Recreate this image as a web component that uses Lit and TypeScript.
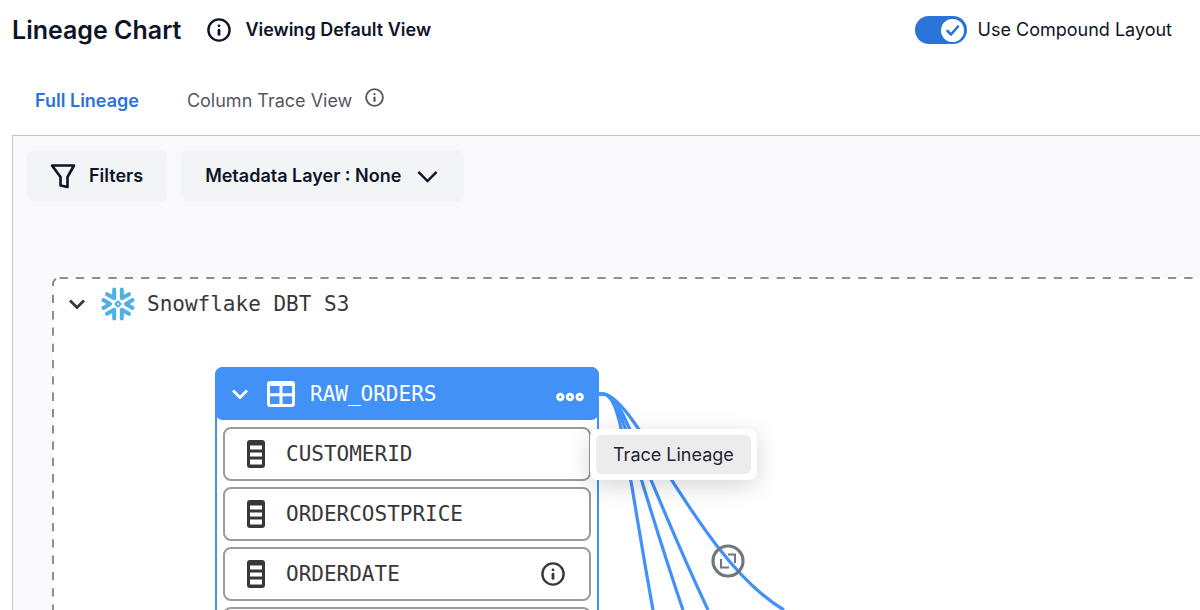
import { LitElement, html, css, svg } from "lit";
import { customElement, state } from "lit/decorators.js";

const infoIcon = (cls: string) => html`<svg class=${cls} viewBox="0 0 24 24" fill="none" aria-hidden="true">
  <circle cx="12" cy="12" r="10.6" stroke="currentColor" stroke-width="2.4" />
  <path d="M12 12.200V16.400" stroke="currentColor" stroke-width="2.8" stroke-linecap="round" />
  <circle cx="12" cy="7.8" r="1.4" fill="currentColor" />
</svg>`;

const chevron = (cls: string, weight = 2.8) => html`<svg class=${cls} viewBox="0 0 16 10" fill="none" aria-hidden="true">
  <path d="M1 1.5L8 8.5L15 1.5" stroke="currentColor" stroke-width=${weight} />
</svg>`;

const columnIcon = html`<svg class="column-icon" viewBox="0 0 18 28" aria-hidden="true">
  <rect width="18" height="28" rx="3" fill="#383838" />
  <path d="M3 5.500h12v4H3zM3 12.400h12v4H3zM3 19.400h12v5H3z" fill="#fff" />
</svg>`;

const tableIcon = html`<svg class="table-icon" viewBox="0 0 28 26" aria-hidden="true">
  <path fill="currentColor" fill-rule="evenodd" d="M3 0h22a3 3 0 0 1 3 3v20a3 3 0 0 1-3 3H3a3 3 0 0 1-3-3V3a3 3 0 0 1 3-3zM3 5v7.200h9.500V5zM15.500 5v7.200H25V5zM3 15.200V23h9.500v-7.800zM15.500 15.200V23H25v-7.800z" />
</svg>`;

const arms = (angle: number) => svg`<path transform="rotate(${angle} 17 17)"
  d="M13.200 2.500V11.300L6 7.200M20.800 2.500V11.300L28 7.200" />`;

const snowflakeIcon = html`<svg class="snowflake" viewBox="0 0 34 34" fill="none" stroke="#4db1e4" stroke-width="4" stroke-linecap="round" stroke-linejoin="round" aria-hidden="true">
  ${arms(0)}${arms(180)}
  <path d="M2.500 13L9 17L2.500 21M31.500 13L25 17L31.500 21" />
  <path d="M17 14.400L19.600 17L17 19.600L14.400 17Z" stroke-width="2" />
</svg>`;

@customElement("app-root")
export class AppRoot extends LitElement {
  @state() private compound = true;

  private columns = [
    { name: "CUSTOMERID", info: false },
    { name: "ORDERCOSTPRICE", info: false },
    { name: "ORDERDATE", info: true },
  ];

  static styles = css`
    :host {
      display: flex;
      flex-direction: column;
      height: 100vh;
      overflow: hidden;
      background: #fff;
      color: #0e1528;
      font: 400 18px/24px Inter, "Liberation Sans", sans-serif;
    }
    * { box-sizing: border-box; }
    svg { display: block; flex: none; }
    button { font: inherit; color: inherit; border: 0; padding: 0; background: none; cursor: pointer; }
    .top { display: flex; align-items: center; height: 60px; padding: 0 28px 0 12px; }
    h1 { margin: 0 26px 0 0; font-size: 25px; line-height: 32px; font-weight: 600; }
    .view { font-weight: 600; }
    .info-lg { width: 24px; height: 24px; margin-right: 14px; }
    .switch { display: flex; align-items: center; gap: 11px; margin-left: auto; cursor: pointer; }
    .track { display: grid; }
    .track > * { grid-area: 1 / 1; }
    .track input {
      appearance: none; width: 52px; height: 28px; margin: 0; border-radius: 14px; background: #99a1ad; cursor: pointer;
    }
    .track input:checked { background: #2c73d9; }
    .knob { width: 23px; height: 23px; margin: 0 3px; align-self: center; pointer-events: none; }
    .track input:checked + .knob { justify-self: end; }
    .tabs { display: flex; gap: 48px; height: 75px; padding: 28px 0 0 35px; align-items: flex-start; }
    .tab { display: flex; gap: 13px; line-height: 26px; color: #55575f; }
    .tab.active { color: #2c73d9; font-weight: 600; }
    .info-sm { width: 19px; height: 19px; }
    .canvas {
      position: relative; flex: 1; min-height: 0; margin-left: 12px; overflow: hidden;
      border: solid #c5c5cb; border-width: 1px 0 0 1px; background: #f9f9fc;
    }
    .toolbar { display: flex; gap: 14px; padding: 14px; font-weight: 600; }
    .tool { display: flex; align-items: center; height: 52px; border-radius: 8px; background: #f3f4f6; }
    .filters { gap: 13px; padding: 0 24px 0 23px; }
    .layer { gap: 16px; padding: 0 26px 0 24px; }
    .funnel { width: 26px; height: 26px; }
    .chev-lg { width: 21px; height: 13px; }
    .chev { width: 16px; height: 10px; }
    .board, .edges { position: absolute; left: 0; top: 0; width: 100%; height: 100%; }
    .edges { pointer-events: none; }
    .group-title {
      position: absolute; left: 56px; top: 151px; display: flex; align-items: center;
      color: #383838; font: 21px/32px "DejaVu Sans Mono", monospace;
    }
    .snowflake { width: 34px; height: 34px; margin: 0 12px 0 16px; }
    .node {
      position: absolute; left: 202px; top: 231px; width: 384px; border: 2px solid #4191f7; border-radius: 8px;
      background: #fff; color: #383838; font: 21px/32px "DejaVu Sans Mono", monospace;
    }
    .node-head {
      display: flex; align-items: center; height: 53px; margin: -2px -2px 7px; padding: 0 15px 0 17px;
      border-radius: 8px; background: #4191f7; color: #fff;
    }
    .table-icon { width: 28px; height: 26px; margin: 0 15px 0 19px; }
    .more { margin: 7px 0 0 auto; }
    .dots { width: 28px; height: 10px; }
    ul { list-style: none; margin: 0; padding: 0 6px; display: grid; gap: 6px; }
    li {
      display: flex; align-items: center; gap: 21px; height: 54px; padding: 0 24px 0 22px;
      border: 2px solid #9b9b9b; border-radius: 8px;
    }
    .column-icon { width: 18px; height: 28px; }
    .info-col { width: 24px; height: 24px; margin-left: auto; }
    .menu {
      position: absolute; left: 577px; top: 293px; padding: 6px; border-radius: 8px; background: #fff;
      box-shadow: 0 6px 24px rgb(0 0 0 / 16%);
    }
    .menu button { height: 39px; padding: 0 17px; border-radius: 6px; background: #ececec; color: #1f2433; }
  `;

  render() {
    return html`
      <header class="top">
        <h1>Lineage Chart</h1>
        ${infoIcon("info-lg")}
        <span class="view">Viewing Default View</span>
        <label class="switch">
          <span class="track">
            <input type="checkbox" role="switch" .checked=${this.compound}
              @change=${(e: Event) => (this.compound = (e.target as HTMLInputElement).checked)} />
            <svg class="knob" viewBox="0 0 23 23" fill="none" aria-hidden="true">
              <circle cx="11.500" cy="11.500" r="11.500" fill="#fff" />
              <path d="M6.500 12L10 15.500L17 7.500" stroke="#2c73d9" stroke-width="2.600" stroke-linecap="round" stroke-linejoin="round" />
            </svg>
          </span>
          Use Compound Layout
        </label>
      </header>
      <nav class="tabs">
        <button class="tab active">Full Lineage</button>
        <button class="tab">Column Trace View ${infoIcon("info-sm")}</button>
      </nav>
      <main class="canvas">
        <div class="board">
          <svg class="edges" fill="none" aria-hidden="true">
            <rect x="40" y="142" width="2400" height="1200" rx="6" fill="#fff" />
            <path d="M46.500 142H2400" stroke="#8f8f8f" stroke-width="2" stroke-dasharray="8.300 8" />
            <path d="M40 150v-2a6 6 0 0 1 3-5.200M40 158.800V1200" stroke="#8f8f8f" stroke-width="2" stroke-dasharray="8.300 8" />
            <path d="M715 418.500H722V427M708 423V431.500H716" stroke="#71777f" stroke-width="2" />
            <g stroke="#4191f7" stroke-width="3.200">
              <path d="M586 258H590C608 258 612 318 640 474" />
              <path d="M586 258H590C609 258 617 318 670 474" />
              <path d="M586 258H590C611 258 622 318 695 474" />
              <path d="M586 258H590C622 258 686 424 771 474" />
            </g>
            <circle cx="715" cy="425" r="15" stroke="#71777f" stroke-width="3.200" />
          </svg>
          <div class="group-title">
            ${chevron("chev")}${snowflakeIcon}<span>Snowflake DBT S3</span>
          </div>
          <section class="node">
            <div class="node-head">
              ${chevron("chev")}${tableIcon}<span>RAW_ORDERS</span>
              <button class="more" aria-label="More actions">
                <svg class="dots" viewBox="0 0 28 10" fill="none" stroke="#fff" stroke-width="3" aria-hidden="true">
                  <circle cx="4.300" cy="5" r="2.700" /><circle cx="14" cy="5" r="2.700" /><circle cx="23.700" cy="5" r="2.700" />
                </svg>
              </button>
            </div>
            <ul>
              ${this.columns.map((c) => html`<li>${columnIcon}<span>${c.name}</span>${c.info ? infoIcon("info-col") : ""}</li>`)}
              <li></li>
            </ul>
          </section>
          <div class="menu"><button>Trace Lineage</button></div>
        </div>
        <div class="toolbar">
          <button class="tool filters">
            <svg class="funnel" viewBox="0 0 26 26" fill="none" stroke="currentColor" stroke-width="2.600" stroke-linejoin="round" aria-hidden="true">
              <path d="M2 2.500H24L17.500 14V24L10.500 22.500V14Z" />
            </svg>
            Filters
          </button>
          <button class="tool layer">Metadata Layer : None ${chevron("chev-lg", 1.9)}</button>
        </div>
      </main>
    `;
  }
}
